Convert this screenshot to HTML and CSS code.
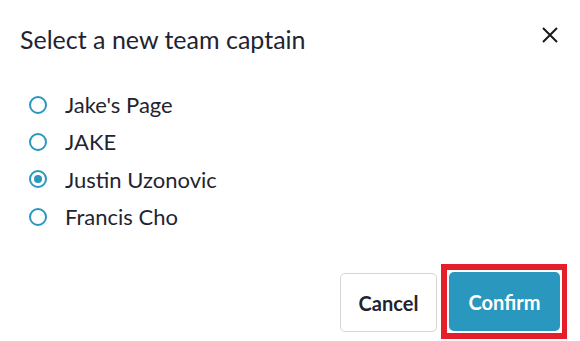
FILE: index.html
```html
<!DOCTYPE html>
<html>
<head>
<meta charset="utf-8">
<link rel="stylesheet" href="styles.css">
</head>
<body>
<div class="dialog">
  <div class="header">
    <h2 class="title">Select a new team captain</h2>
    <button class="close" aria-label="Close">
      <svg width="16" height="16" viewBox="0 0 16 16"><path d="M1 1L15 15M15 1L1 15" stroke="#1a1a1a" stroke-width="2" fill="none"/></svg>
    </button>
  </div>
  <ul class="options">
    <li class="option"><span class="radio"></span><span class="label">Jake's Page</span></li>
    <li class="option"><span class="radio"></span><span class="label">JAKE</span></li>
    <li class="option"><span class="radio checked"></span><span class="label">Justin Uzonovic</span></li>
    <li class="option"><span class="radio"></span><span class="label">Francis Cho</span></li>
  </ul>
  <div class="footer">
    <button class="btn cancel">Cancel</button>
    <span class="highlight"><button class="btn confirm">Confirm</button></span>
  </div>
</div>
</body>
</html>
```
FILE: styles.css
```css
* { box-sizing: border-box; }
html, body { margin: 0; background: #fff; }
body { font-family: Lato, "Open Sans", sans-serif; color: #1f2430; }
.dialog { width: 580px; height: 341px; padding: 24px 13px 0 20px; display: flex; flex-direction: column; }
.header { display: flex; align-items: flex-start; justify-content: space-between; }
.title { margin: 0; font-size: 25px; line-height: 30px; font-weight: 400; color: #1f2430; }
.close { background: none; border: none; padding: 0; width: 16px; height: 16px; display: flex; margin-top: 3px; margin-right: 9px; }
.options { list-style: none; margin: 32px 0 0 0; padding: 0 0 0 8.5px; display: flex; flex-direction: column; }
.option { display: flex; align-items: center; height: 37.3px; }
.radio { width: 18px; height: 18px; border: 2px solid #2a97bf; border-radius: 50%; margin-right: 18.5px; display: flex; align-items: center; justify-content: center; flex: none; }
.radio.checked::after { content: ""; width: 8px; height: 8px; background: #2a97bf; border-radius: 50%; }
.label { font-size: 22px; color: #1f2430; }
.footer { display: flex; justify-content: flex-end; align-items: flex-start; margin-top: 29px; }
.btn { font-family: Lato, sans-serif; font-size: 20px; font-weight: 700; height: 59px; border-radius: 5px; padding: 0; }
.cancel { width: 97px; background: #fff; border: 1px solid #d6d6d6; color: #1f2430; margin-top: 9px; margin-right: 4px; }
.highlight { display: flex; border: 6px solid #e41e2b; border-right-width: 5px; padding: 2px; }
.confirm { width: 111px; background: #2a97bf; border: none; color: #fff; }
```
